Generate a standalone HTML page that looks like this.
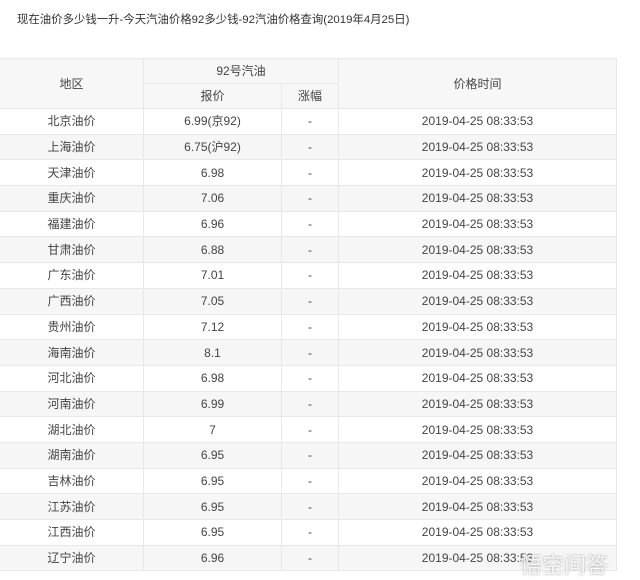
<!DOCTYPE html>
<html><head><meta charset="utf-8"><style>
body{margin:0;width:640px;height:574px;background:#fff;overflow:hidden;font-family:"Liberation Sans","Noto Sans CJK SC",sans-serif;color:#444;position:relative}
.t{position:absolute;left:17px;top:12px;font-size:11.4px;color:#333;line-height:16px}
table{position:absolute;left:-1px;top:58px;border-collapse:collapse;font-size:12px;width:617px;table-layout:fixed}
td{border:1px solid #e8e8e8;text-align:center;height:24.7px;padding:0;line-height:14px}
.h td{background:#f7f7f7;height:24px}
tr.g td{background:#f6f6f6}
.wm{position:absolute;left:520px;top:548px;font-size:22px;color:rgba(255,255,255,.85);text-shadow:0 0 2px #999}
</style></head><body>
<div class="t">现在油价多少钱一升-今天汽油价格92多少钱-92汽油价格查询(2019年4月25日)</div>
<table>
<colgroup><col style="width:144px"><col style="width:138px"><col style="width:57px"><col style="width:278px"></colgroup>
<tr class="h"><td rowspan="2">地区</td><td colspan="2">92号汽油</td><td rowspan="2">价格时间</td></tr>
<tr class="h"><td>报价</td><td>涨幅</td></tr>
<tr><td>北京油价</td><td>6.99(京92)</td><td>-</td><td>2019-04-25 08:33:53</td></tr>
<tr class="g"><td>上海油价</td><td>6.75(沪92)</td><td>-</td><td>2019-04-25 08:33:53</td></tr>
<tr><td>天津油价</td><td>6.98</td><td>-</td><td>2019-04-25 08:33:53</td></tr>
<tr class="g"><td>重庆油价</td><td>7.06</td><td>-</td><td>2019-04-25 08:33:53</td></tr>
<tr><td>福建油价</td><td>6.96</td><td>-</td><td>2019-04-25 08:33:53</td></tr>
<tr class="g"><td>甘肃油价</td><td>6.88</td><td>-</td><td>2019-04-25 08:33:53</td></tr>
<tr><td>广东油价</td><td>7.01</td><td>-</td><td>2019-04-25 08:33:53</td></tr>
<tr class="g"><td>广西油价</td><td>7.05</td><td>-</td><td>2019-04-25 08:33:53</td></tr>
<tr><td>贵州油价</td><td>7.12</td><td>-</td><td>2019-04-25 08:33:53</td></tr>
<tr class="g"><td>海南油价</td><td>8.1</td><td>-</td><td>2019-04-25 08:33:53</td></tr>
<tr><td>河北油价</td><td>6.98</td><td>-</td><td>2019-04-25 08:33:53</td></tr>
<tr class="g"><td>河南油价</td><td>6.99</td><td>-</td><td>2019-04-25 08:33:53</td></tr>
<tr><td>湖北油价</td><td>7</td><td>-</td><td>2019-04-25 08:33:53</td></tr>
<tr class="g"><td>湖南油价</td><td>6.95</td><td>-</td><td>2019-04-25 08:33:53</td></tr>
<tr><td>吉林油价</td><td>6.95</td><td>-</td><td>2019-04-25 08:33:53</td></tr>
<tr class="g"><td>江苏油价</td><td>6.95</td><td>-</td><td>2019-04-25 08:33:53</td></tr>
<tr><td>江西油价</td><td>6.95</td><td>-</td><td>2019-04-25 08:33:53</td></tr>
<tr class="g"><td>辽宁油价</td><td>6.96</td><td>-</td><td>2019-04-25 08:33:53</td></tr>
</table>
<div class="wm">悟空问答</div>
</body></html>
